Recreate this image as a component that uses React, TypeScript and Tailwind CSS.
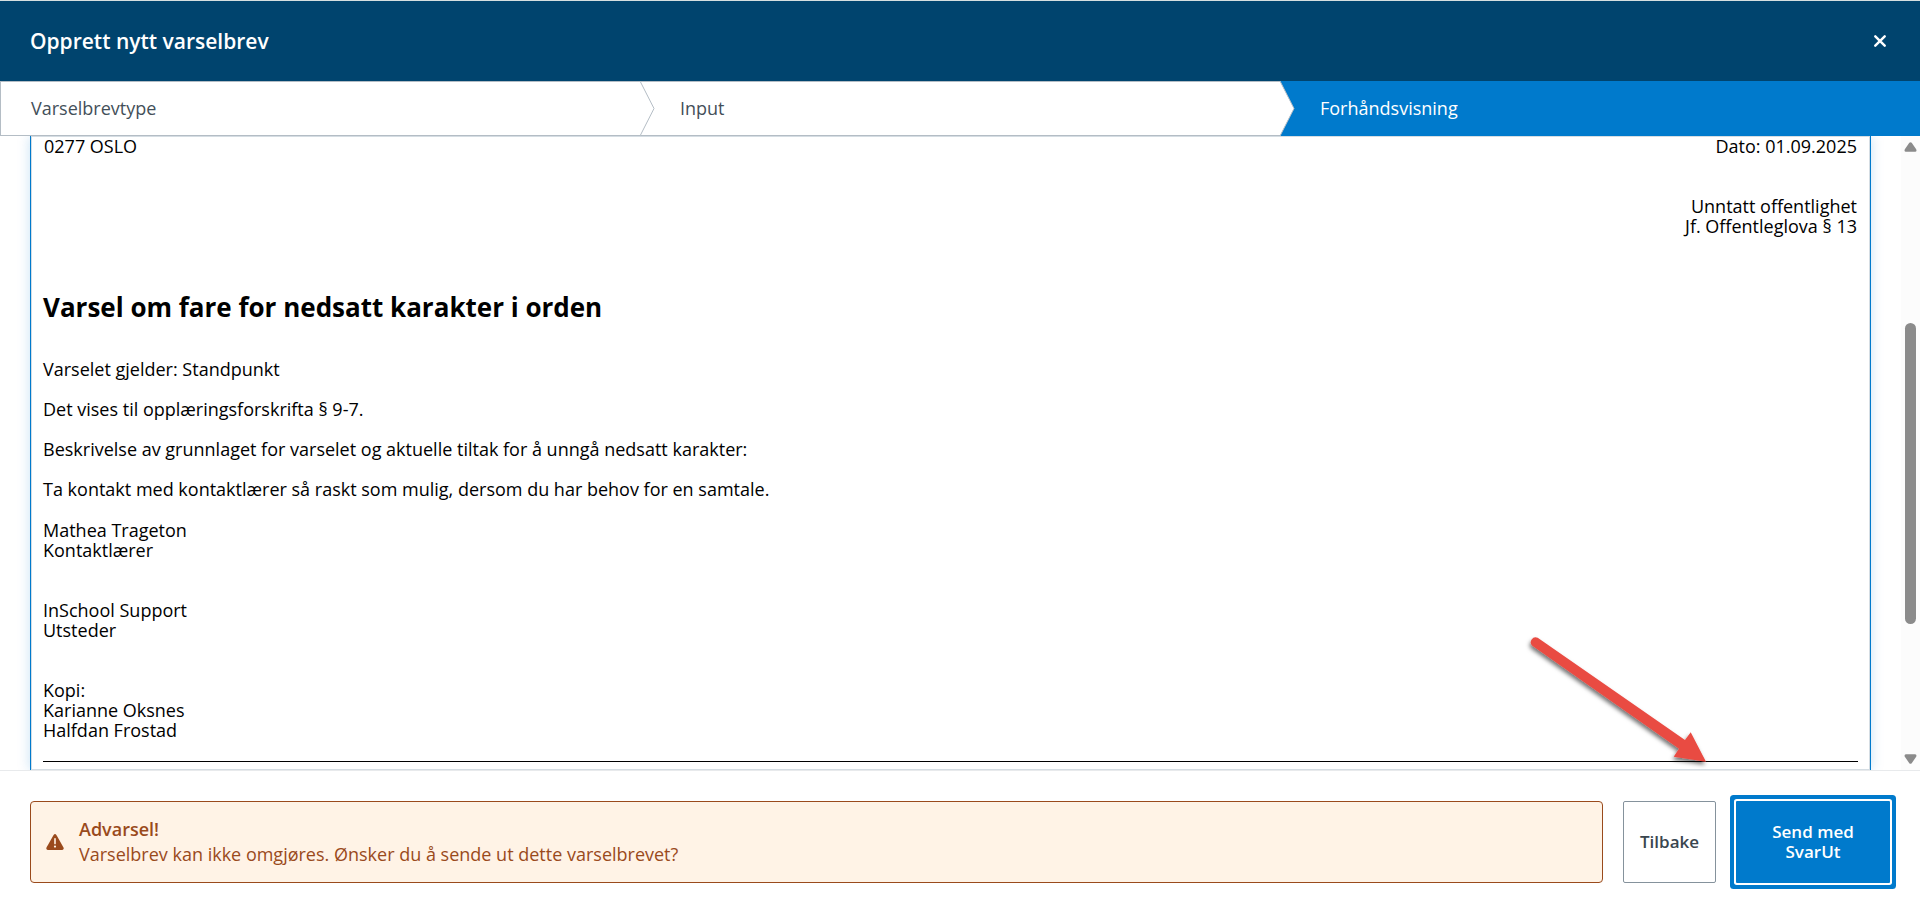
import React from 'react';

const paragraphs = [
  'Varselet gjelder: Standpunkt',
  'Det vises til opplæringsforskrifta § 9-7.',
  'Beskrivelse av grunnlaget for varselet og aktuelle tiltak for å unngå nedsatt karakter:',
  'Ta kontakt med kontaktlærer så raskt som mulig, dersom du har behov for en samtale.',
];

const signatures = [
  ['Mathea Trageton', 'Kontaktlærer'],
  ['InSchool Support', 'Utsteder'],
  ['Kopi:', 'Karianne Oksnes', 'Halfdan Frostad'],
];

function StepArrow() {
  return (
    <svg width="15" height="55" viewBox="0 0 15 55" className="-my-px shrink-0" aria-hidden="true">
      <path d="M0 0 L14 27.5 L0 55 Z" fill="#fff" />
      <path d="M0 0 L14 27.5 L0 55" fill="none" stroke="#b4bdc5" />
    </svg>
  );
}

function Steps() {
  return (
    <ol className="grid h-[55px] shrink-0 grid-cols-3 text-[18px] text-[#434f59]">
      <li className="flex items-center border-y border-l border-[#b4bdc5] pl-[30px]">
        <a href="#type">Varselbrevtype</a>
      </li>
      <li className="flex items-center gap-[25px] border-y border-[#b4bdc5]">
        <StepArrow />
        <a href="#input">Input</a>
      </li>
      <li className="flex items-center gap-[25px] bg-[#007acc] text-white" aria-current="step">
        <StepArrow />
        <a href="#preview">Forhåndsvisning</a>
      </li>
    </ol>
  );
}

function Scrollbar() {
  return (
    <div className="flex w-[19px] shrink-0 flex-col items-center bg-[#fcfcfc] py-[6px]" aria-hidden="true">
      <svg width="13" height="10" viewBox="0 0 13 10" fill="#8b8b8b">
        <path d="M5.3 0.8 Q6.5 -0.4 7.7 0.8 L12.2 7.3 Q13 9.6 11.2 9.8 H1.8 Q0 9.6 0.8 7.3 Z" />
      </svg>
      <div className="grow-[171]" />
      <div className="w-[11px] grow-[302] rounded-full bg-[#8b8b8b]" />
      <div className="grow-[130]" />
      <svg width="13" height="10" viewBox="0 0 13 10" fill="#8b8b8b">
        <path d="M5.3 9.2 Q6.5 10.4 7.7 9.2 L12.2 2.7 Q13 0.4 11.2 0.2 H1.8 Q0 0.4 0.8 2.7 Z" />
      </svg>
    </div>
  );
}

function PointerArrow() {
  return (
    <svg
      width="200"
      height="141"
      viewBox="0 0 200 141"
      className="pointer-events-none absolute right-[200px] bottom-0"
      aria-hidden="true"
    >
      <defs>
        <filter id="arrow-shadow" x="-10%" y="-10%" width="120%" height="125%">
          <feDropShadow dx="-1" dy="3" stdDeviation="2" floodColor="#000" floodOpacity="0.55" />
        </filter>
      </defs>
      <path
        d="M17.7 8.7 L165 111 L170.7 103.3 L186 132.7 L153.7 127.7 L159 119.7 L12.3 16.7 A4.9 4.9 0 0 1 17.7 8.7 Z"
        fill="#e94b43"
        filter="url(#arrow-shadow)"
      />
    </svg>
  );
}

function Letter() {
  return (
    <article className="mx-[30px] min-w-0 grow border-x border-[#007acc] px-3 text-[18px] leading-5 text-black shadow-[0_0_12px_rgba(0,122,204,0.22),inset_0_0_0_1px_#d5dde3]">
      <div className="flex justify-between">
        <p className="pl-px">0277 OSLO</p>
        <p className="pr-px">Dato: 01.09.2025</p>
      </div>
      <p className="mt-10 pr-px text-right">
        Unntatt offentlighet
        <br />
        Jf. Offentleglova § 13
      </p>
      <h2 className="mt-[51px] text-[26px] leading-[40px] font-bold">
        Varsel om fare for nedsatt karakter i orden
      </h2>
      <div className="mt-8 flex flex-col gap-5">
        {paragraphs.map((text) => (
          <p key={text}>{text}</p>
        ))}
      </div>
      <div className="mt-[21px] flex flex-col gap-10">
        {signatures.map((lines) => (
          <div key={lines[0]}>
            {lines.map((line) => (
              <p key={line}>{line}</p>
            ))}
          </div>
        ))}
      </div>
      <hr className="mt-[21px] border-black" />
    </article>
  );
}

function Footer() {
  return (
    <footer className="flex shrink-0 items-stretch gap-5 border-t border-[#e8eaec] px-[30px] pt-[30px] pb-[29px]">
      <div
        role="alert"
        className="flex h-[82px] grow items-center gap-[15px] rounded-[4px] border border-[#9a4a1c] bg-[#fff3e6] pl-[15px] text-[18px] leading-[25px] text-[#9a4a1c]"
      >
        <svg width="18" height="16" viewBox="0 0 18 16" aria-hidden="true">
          <path d="M7.6 0.9 Q9 -0.8 10.4 0.9 L17.5 13.6 Q18.1 15.7 16.2 16 H1.8 Q-0.1 15.7 0.5 13.6 Z" fill="#9a4a1c" />
          <path d="M9 4.8 V9.6" stroke="#fff3e6" strokeWidth="1.6" strokeLinecap="round" />
          <circle cx="9" cy="12.6" r="1.1" fill="#fff3e6" />
        </svg>
        <div>
          <strong className="block font-semibold">Advarsel!</strong>
          <p>Varselbrev kan ikke omgjøres. Ønsker du å sende ut dette varselbrevet?</p>
        </div>
      </div>
      <button
        type="button"
        className="w-[93px] shrink-0 rounded-[2px] border border-[#85929c] bg-white text-[17px] leading-5 font-semibold text-[#3a464f]"
      >
        Tilbake
      </button>
      <button
        type="button"
        className="w-[154px] shrink-0 rounded-[1px] bg-[#007acc] px-8 text-[17px] leading-5 font-semibold text-white shadow-[0_0_0_2px_#fff,0_0_0_6px_#007acc]"
      >
        Send med SvarUt
      </button>
    </footer>
  );
}

export default function App() {
  return (
    <div className="flex h-screen flex-col bg-white font-['Open_Sans',sans-serif]">
      <header className="flex h-[81px] shrink-0 items-center justify-between border-t border-[#d5dfe0] bg-[#00446e] pr-8 pl-[30px] text-white">
        <h1 className="text-[21px] leading-7 font-semibold">Opprett nytt varselbrev</h1>
        <button type="button" aria-label="Lukk" className="flex size-4 items-center justify-center">
          <svg width="12" height="12" viewBox="0 0 12 12" aria-hidden="true">
            <path d="M1.3 1.3 L10.7 10.7 M10.7 1.3 L1.3 10.7" stroke="#fff" strokeWidth="2.4" strokeLinecap="round" />
          </svg>
        </button>
      </header>
      <Steps />
      <main className="relative flex min-h-0 grow overflow-hidden">
        <Letter />
        <Scrollbar />
        <PointerArrow />
      </main>
      <Footer />
    </div>
  );
}
